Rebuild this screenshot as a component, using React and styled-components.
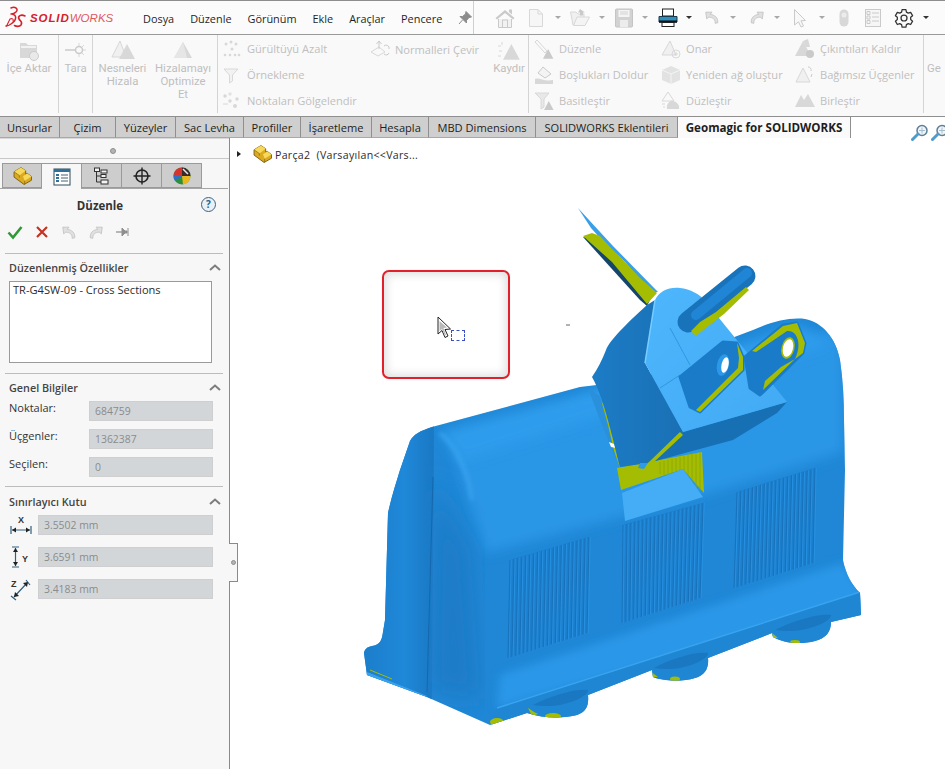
import React from "react"
import styled, { createGlobalStyle } from "styled-components"

const Global = createGlobalStyle`
  html, body { margin: 0; padding: 0; background: #fff; }
  body { font-family: "Open Sans", "Noto Sans", sans-serif; font-size: 11px; color: #2b2b2b; }
  * { box-sizing: border-box; }
`

const Page = styled.div`
  width: 945px;
  height: 769px;
  overflow: hidden;
  display: flex;
  flex-direction: column;
`

/* ---- title bar ---- */
const TitleBar = styled.div`
  height: 35px;
  flex: none;
  display: flex;
  align-items: center;
  background: #fbfbfb;
  border-top: 1px solid #8d8d8d;
  border-bottom: 1px solid #9a9a9a;
`
const Logo = styled.div`
  width: 143px;
  flex: none;
  display: flex;
  align-items: center;
  padding-left: 5px;
`
const LogoBold = styled.span`
  font-family: "Liberation Sans", sans-serif;
  font-weight: 700;
  font-style: italic;
  font-size: 11.5px;
  letter-spacing: 0.9px;
  color: #d6202a;
  margin-left: 3px;
`
const LogoLight = styled.span`
  font-family: "Liberation Sans", sans-serif;
  font-style: italic;
  font-size: 11.5px;
  letter-spacing: 0.05px;
  color: #e0585e;
`
const Menu = styled.div`
  display: flex;
  gap: 16px;
  width: 331px;
  height: 100%;
  align-items: center;
  border-right: 1px solid #cfcfcf;
`
const MenuItem = styled.span`
  font-size: 10.9px;
  color: #1f1f1f;
  padding-top: 1px;
`
const Tools = styled.div`
  display: flex;
  align-items: center;
  padding-left: 20px;
`
const ToolSlot = styled.div`
  display: flex;
  align-items: center;
  justify-content: center;
  width: ${(p) => p.$w || 22}px;
  margin-right: ${(p) => p.$gap || 0}px;
`
const Caret = styled.span`
  width: 0;
  height: 0;
  margin-left: ${(p) => p.$left}px;
  margin-right: ${(p) => p.$right}px;
  border-left: 3px solid transparent;
  border-right: 3px solid transparent;
  border-top: 3px solid ${(p) => (p.$dark ? "#333" : "#a8a8a8")};
`

/* ---- ribbon ---- */
const Ribbon = styled.div`
  height: 81px;
  flex: none;
  display: flex;
  background: #f9f9f9;
  padding-bottom: 3px;
`
const Group = styled.div`
  width: ${(p) => p.$w}px;
  flex: none;
  display: flex;
  padding-left: ${(p) => p.$pad || 0}px;
  border-right: 1px solid #d4d4d4;
`
const LargeButton = styled.div`
  width: ${(p) => p.$w}px;
  flex: none;
  display: flex;
  flex-direction: column;
  align-items: center;
  padding-top: 3px;
  color: #bfbfbf;
  font-family: Roboto, "Open Sans", sans-serif;
  font-size: 11.4px;
  line-height: 13px;
  text-align: center;
  white-space: nowrap;
`
const IconBox = styled.div`
  height: 24px;
  display: flex;
  align-items: center;
  justify-content: center;
`
const SmallColumn = styled.div`
  width: ${(p) => p.$w}px;
  flex: none;
  display: flex;
  flex-direction: column;
  padding-top: 1px;
`
const SmallButton = styled.div`
  height: 26px;
  display: flex;
  align-items: center;
  color: #bfbfbf;
  font-size: 11.1px;
  white-space: nowrap;
`
const SmallIcon = styled.div`
  width: 20px;
  flex: none;
  margin-right: 5px;
  display: flex;
  justify-content: center;
`

/* ---- command tabs ---- */
const TabStrip = styled.div`
  height: 22px;
  flex: none;
  display: flex;
  position: relative;
  z-index: 2;
`
const CommandTab = styled.div`
  width: ${(p) => p.$w}px;
  flex: none;
  display: flex;
  align-items: center;
  justify-content: center;
  white-space: nowrap;
  font-size: ${(p) => (p.$active ? 11.6 : 11.1)}px;
  color: #1e1e1e;
  font-weight: ${(p) => (p.$active ? 700 : 400)};
  background: ${(p) => (p.$active ? "#fafafa" : "#cfcfcf")};
  border-top: 1px solid #8f8f8f;
  border-right: 1px solid #8f8f8f;
  border-bottom: ${(p) => (p.$active ? "0" : "1px solid #a8a8a8")};
`
const ViewTools = styled.div`
  flex: 1;
  display: flex;
  align-items: flex-start;
  padding: 7px 0 0 60px;
  gap: 2px;
  border-top: 1px solid #8f8f8f;
`

/* ---- workspace ---- */
const Workspace = styled.div`
  flex: 1;
  min-height: 0;
  display: flex;
  position: relative;
`
const Panel = styled.aside`
  width: 230px;
  flex: none;
  background: #f7f7f7;
  border-right: 1px solid #8a8a8a;
  display: flex;
  flex-direction: column;
`
const Handle = styled.div`
  height: 21px;
  flex: none;
  display: flex;
  align-items: center;
  justify-content: center;
  padding: 5px 3px 0 0;
  border-bottom: 1px solid #c8c8c8;
  box-shadow: inset 0 4px 0 -3px #d8d8d8;
`
const Dot = styled.span`
  width: 6px;
  height: 6px;
  border-radius: 50%;
  background: #b4b4b4;
  border: 1px solid #8f8f8f;
`
const PanelTabs = styled.div`
  display: flex;
  padding: 4px 0 0 2px;
  height: 30px;
  flex: none;
  border-bottom: 1px solid #a5a5a5;
  margin-right: 1px;
`
const PanelTab = styled.div`
  width: 40px;
  height: ${(p) => (p.$active ? 26 : 25)}px;
  display: flex;
  align-items: center;
  justify-content: center;
  background: ${(p) => (p.$active ? "#f7f7f7" : "#cdcdcd")};
  border: 1px solid #9a9a9a;
  border-left-width: ${(p) => (p.$first ? 1 : 0)}px;
  border-bottom: ${(p) => (p.$active ? "0" : "1px solid #9a9a9a")};
  position: relative;
  z-index: ${(p) => (p.$active ? 1 : 0)};
`
const PanelHead = styled.div`
  height: 33px;
  flex: none;
  display: flex;
  align-items: center;
  justify-content: center;
  position: relative;
  padding: 0 29px 0 0;
  font-weight: 700;
  font-size: 11.5px;
  color: #333;
`
const HelpBadge = styled.span`
  position: absolute;
  right: 13px;
  top: 8px;
  width: 15px;
  height: 15px;
  border-radius: 50%;
  border: 1.5px solid #41627e;
  background: #e8f1f7;
  color: #2d5f86;
  font-size: 10px;
  line-height: 12px;
  text-align: center;
  font-weight: 700;
`
const Actions = styled.div`
  height: 32px;
  flex: none;
  display: flex;
  align-items: center;
  gap: 11px;
  margin: 0 6px 0 5px;
  padding: 0 0 11px 2px;
  border-bottom: 1px solid #bcbcbc;
`
const Section = styled.section`
  display: flex;
  flex-direction: column;
  margin: 0 6px 0 5px;
  height: ${(p) => p.$h}px;
  flex: none;
  border-bottom: ${(p) => (p.$last ? "0" : "1px solid #bcbcbc")};
`
const SectionTitle = styled.div`
  height: ${(p) => p.$h}px;
  flex: none;
  display: flex;
  align-items: center;
  justify-content: space-between;
  padding: 0 2px 0 4px;
  font-size: 10.8px;
  font-weight: 600;
  color: #444;
`
const Notes = styled.div`
  margin-left: 4px;
  width: 203px;
  height: 82px;
  flex: none;
  background: #fff;
  border: 1px solid #9a9a9a;
  padding: 0 3px;
  font-size: 11.1px;
  color: #2b2b2b;
`
const Fields = styled.div`
  display: flex;
  flex-direction: column;
  gap: ${(p) => p.$gap}px;
  padding-left: 4px;
`
const FieldRow = styled.div`
  display: flex;
  align-items: center;
  height: 20px;
  font-size: 11px;
  color: #333;
`
const FieldLabel = styled.span`
  width: ${(p) => p.$w}px;
  flex: none;
  padding-bottom: 8px;
`
const FieldIcon = styled.span`
  width: 29px;
  flex: none;
  display: flex;
  justify-content: flex-start;
`
const ReadOnly = styled.div`
  width: ${(p) => p.$w}px;
  height: 20px;
  flex: none;
  padding-left: 5px;
  line-height: 18px;
  font-size: 10.4px;
  color: #8b8b8b;
  background: #d3d6d9;
  border: 1px solid #e9e9e9;
  outline: 1px solid #cfcfcf;
  outline-offset: -1px;
`
const Grip = styled.div`
  position: absolute;
  left: 229px;
  top: 405px;
  z-index: 1;
  width: 9px;
  height: 39px;
  background: #f7f7f7;
  border: 1px solid #8a8a8a;
  border-left: 0;
  display: flex;
  align-items: center;
  justify-content: center;
`
const SmallDot = styled(Dot)`
  width: 5px;
  height: 5px;
`

/* ---- graphics area ---- */
const Viewport = styled.main`
  flex: 1;
  position: relative;
  background: #fff;
`
const ModelSvg = styled.svg`
  display: block;
`
const TreeRow = styled.div`
  position: absolute;
  left: 7px;
  top: 6px;
  display: flex;
  align-items: center;
  font-size: 10.6px;
  letter-spacing: 0.3px;
  color: #2b2b2b;
  white-space: pre;
`
const TreeLabel = styled.span`
  padding-top: 3px;
  margin-left: 3px;
`
const TreeArrow = styled.span`
  width: 0;
  height: 0;
  border-top: 3.5px solid transparent;
  border-bottom: 3.5px solid transparent;
  border-left: 4px solid #222;
  margin-right: 12px;
`
const Callout = styled.div`
  position: absolute;
  left: 152px;
  top: 132px;
  width: 128px;
  height: 109px;
  border: 2px solid #e2202a;
  border-radius: 7px;
  box-shadow: inset 0 0 9px 3px rgba(0, 0, 0, 0.12), 0 0 1px rgba(0, 0, 0, 0.2);
`
const Marquee = styled.div`
  position: absolute;
  left: 67px;
  top: 58px;
  width: 14px;
  height: 11px;
  border: 1px dashed #3a4fc0;
`
const Pointer = styled.svg`
  position: absolute;
  left: 53px;
  top: 44px;
`

/* ---- icons ---- */
const G = "#d8d8d8"
const GD = "#cacaca"

const Svg = ({ w = 20, h = 20, children }) => (
  <svg width={w} height={h} viewBox={`0 0 ${w} ${h}`} style={{ display: "block" }}>
    {children}
  </svg>
)

const DsMark = () => (
  <svg width="22" height="24" viewBox="0 0 22 24" fill="none" stroke="#d6202a" strokeLinecap="round" strokeLinejoin="round">
    <path d="M6 2 C10 0 14 3 11 6 C9 8 7 8 6 8 M7 8 C12 9 12 14 6 18 C4 19.5 2 20 1 20" strokeWidth="1.5" />
    <path d="M5 13 L1.6 20 M5 13 C7 12 9 13 8 15" strokeWidth="1.1" />
    <path d="M20 10 C16 8 12.5 10 14 13 C15.5 15.5 18 16 16 19 C14.5 21 11 20.5 9.5 19.5" strokeWidth="1.6" />
  </svg>
)

const Home = () => (
  <Svg w={22} h={22}>
    <path d="M1.5 11 L11 3 L20.5 11 L19 12.5 L11 6 L3 12.5 Z" fill={GD} />
    <path d="M15 2.5 h3 v5 l-3 -2.5 Z" fill={GD} />
    <path d="M4.5 12 V20.5 H17.5 V12" fill="#f2f2f2" stroke={GD} />
    <rect x="8.5" y="13" width="5" height="7.5" fill="none" stroke={GD} />
  </Svg>
)
const Doc = () => (
  <Svg w={16} h={20}>
    <path d="M1.5 1.5 H10 L14.5 6 V18.5 H1.5 Z" fill="#f6f6f6" stroke={G} />
    <path d="M10 1.5 V6 H14.5" fill="none" stroke={G} />
  </Svg>
)
const Folder = () => (
  <Svg w={22} h={20}>
    <path d="M1.5 4 H7 L9 6 H15 V17 H4 Z" fill="#f0f0f0" stroke={G} />
    <path d="M4.5 17.5 L8 9 H20.5 L16 17.5 Z" fill="#f4f4f4" stroke={G} />
    <path d="M11 1 l5 3.5 -2 0 0 3 -3 0 0 -3 -2 0 Z" fill={GD} />
  </Svg>
)
const Save = () => (
  <Svg w={18} h={20}>
    <rect x="0.5" y="1" width="17" height="18" rx="1" fill="#d2d2d2" stroke="#c4c4c4" />
    <rect x="3.5" y="2" width="11" height="7" fill="#f4f4f4" />
    <path d="M5 4 h8 M5 6 h8" stroke="#d2d2d2" />
    <rect x="5" y="12" width="8" height="7" fill="#ececec" />
  </Svg>
)
const Printer = () => (
  <Svg w={20} h={20}>
    <rect x="4.5" y="1" width="11" height="7" fill="#fff" stroke="#222" />
    <path d="M1 8.5 H19 V14 H1 Z" fill="#2f8fbe" stroke="#1a3a4c" />
    <rect x="1" y="12.5" width="18" height="2.2" fill="#111" />
    <rect x="4" y="14.5" width="12" height="4" fill="#fff" stroke="#222" />
  </Svg>
)
const UndoIcon = ({ flip }) => (
  <svg width="16" height="17" viewBox="0 0 18 18" style={{ display: "block" }}>
    <g transform={flip ? "translate(18 0) scale(-1 1)" : undefined}>
      <path d="M2 3 L9 3 L7 5.5 C12 6 16 9 15.5 15 L12.5 15.5 C13 11 10 9 5.5 8.5 L3 10.5 Z" fill="#e0e0e0" stroke="#bfbfbf" strokeWidth="0.9" />
    </g>
  </svg>
)
const Arrow = () => (
  <Svg w={14} h={20}>
    <path d="M1.5 1.5 L12.5 12.5 L8 12.8 L10.5 18 L8 19 L5.5 13.8 L1.5 17 Z" fill="#f8f8f8" stroke={GD} />
  </Svg>
)
const Light = () => (
  <Svg w={10} h={20}>
    <rect x="0.5" y="1.5" width="9" height="17" rx="4.5" fill={G} />
    <circle cx="5" cy="7" r="2.5" fill="#ececec" />
  </Svg>
)
const ListDoc = () => (
  <Svg w={16} h={20}>
    <rect x="0.5" y="1.5" width="15" height="17" fill="#f6f6f6" stroke={GD} />
    <path d="M7 5 h7 M7 9 h7 M7 13 h7" stroke={GD} />
    <path d="M2 3.5 h3 v3 h-3 Z M2 8 h3 v3 h-3 Z M2 12.5 h3 v3 h-3 Z" fill="none" stroke={GD} />
  </Svg>
)
const Gear = () => (
  <svg width="20" height="20" viewBox="0 0 24 24" fill="none" stroke="#333" strokeWidth="1.5" style={{ display: "block" }}>
    <path d="M9.7 2h4.6l.6 3 2.2 1.2 2.9-1 2.3 4-2.3 2v2.6l2.3 2-2.3 4-2.9-1-2.2 1.2-.6 3H9.7l-.6-3-2.2-1.2-2.9 1-2.3-4 2.3-2v-2.6l-2.3-2 2.3-4 2.9 1L9.1 5z" strokeLinejoin="round" />
    <circle cx="12" cy="12" r="3.6" />
  </svg>
)
const Zoomer = () => (
  <Svg w={18} h={18}>
    <circle cx="11" cy="6.5" r="5" fill="#eef5fa" stroke="#5d7f98" strokeWidth="1.5" />
    <path d="M11 3.5 v6 M8 6.5 h6" stroke="#a8bccb" />
    <path d="M7 10 L1.5 15.5" stroke="#4f9ccb" strokeWidth="3" strokeLinecap="round" />
  </Svg>
)

const ImportIcon = () => (
  <Svg w={24} h={24}>
    <path d="M3 5 h6 l2 2 h9 v13 H3 Z" fill={G} />
    <rect x="4" y="8" width="15" height="2" fill="#f2f2f2" />
    <circle cx="17" cy="18" r="4.5" fill="#e9e9e9" stroke="#cccccc" />
  </Svg>
)
const ScanIcon = () => (
  <Svg w={24} h={24}>
    <path d="M1 12 H12" stroke={GD} strokeWidth="1.5" />
    <circle cx="15" cy="12" r="3.5" fill="none" stroke={GD} strokeWidth="1.5" />
    <path d="M15 5 v3 M15 16 v3 M20 7 l-2 2 M20 17 l-2 -2 M22 12 h-3" stroke={G} />
  </Svg>
)
const Peak = ({ x = 0, y = 0, s = 1, fill = G }) => (
  <path transform={`translate(${x} ${y}) scale(${s})`} d="M8 0 L16 15 H0 Z" fill={fill} />
)
const AlignIcon = () => (
  <Svg w={24} h={24}>
    <path d="M9 3 L1 19 H15 Z" fill="#f0f0f0" stroke={G} />
    <Peak x={8} y={6} s={1} fill={G} />
  </Svg>
)
const OptimizeIcon = () => (
  <Svg w={24} h={24}>
    <path d="M12 4 L21 20 H3 Z" fill={G} />
    <path d="M12 4 L16 20 H3 Z" fill="#e6e6e6" />
  </Svg>
)
const DotsIcon = ({ funnel }) => (
  <Svg w={20} h={18}>
    {funnel ? (
      <path d="M2 3 H16 L10.5 9 V15 L7.5 17 V9 Z" fill="#f2f2f2" stroke={G} />
    ) : (
      <>
        <circle cx="4" cy="4" r="1.5" fill={G} />
        <circle cx="9" cy="2" r="1.5" fill={G} />
        <circle cx="14" cy="4" r="1.5" fill={G} />
        <circle cx="10" cy="9" r="1.5" fill={G} />
        <circle cx="3" cy="15" r="1.3" fill={G} />
        <circle cx="8" cy="15" r="1.3" fill={G} />
        <circle cx="13" cy="15" r="1.3" fill={G} />
        <circle cx="17" cy="15" r="1.3" fill={G} />
      </>
    )}
  </Svg>
)
const ShadeIcon = () => (
  <Svg w={20} h={18}>
    <circle cx="3" cy="5" r="1.7" fill={G} />
    <circle cx="8" cy="3" r="1.7" fill="#e2e2e2" />
    <circle cx="8" cy="10" r="1.7" fill={G} />
    <circle cx="15" cy="8" r="1.7" fill={G} />
    <circle cx="13" cy="15" r="2" fill={G} />
    <path d="M1 13 h5" stroke={G} />
  </Svg>
)
const FlipIcon = () => (
  <Svg w={20} h={18}>
    <path d="M1 12 L9 7 L15 12 L8 16 Z" fill="none" stroke={G} />
    <path d="M9 9 V1 M6.5 4 L9 1 L11.5 4" fill="none" stroke={GD} />
    <path d="M14 6 a3 3 0 0 1 5 3 M19 13 a3 3 0 0 1 -5 1" fill="none" stroke={GD} />
  </Svg>
)
const ShiftIcon = () => (
  <Svg w={24} h={24}>
    <Peak x={6} y={6} s={1.05} />
    <path d="M1 8 h3 M2 13 h3 M1 18 h3 M5 4 v3" stroke={G} />
  </Svg>
)
const BrushIcon = () => (
  <Svg w={20} h={20}>
    <path d="M3 1 L13 12 L11 14 L1 3 Z" fill="none" stroke={G} />
    <Peak x={9} y={10} s={0.65} fill={GD} />
  </Svg>
)
const FillIcon = () => (
  <Svg w={20} h={20}>
    <path d="M9 2 L17 9 L11 13 L4 8 Z" fill="#f4f4f4" stroke={GD} />
    <path d="M1 19 V14 C5 12 10 17 19 15 V19 Z" fill={G} />
  </Svg>
)
const SimplifyIcon = () => (
  <Svg w={20} h={20}>
    <path d="M1 3 H15 L10 9 V17 L7 19 V9 Z" fill="#e8e8e8" stroke={G} />
    <Peak x={10} y={11} s={0.6} fill={GD} />
  </Svg>
)
const RepairIcon = () => (
  <Svg w={20} h={20}>
    <path d="M9 2 L1 16 H15 Z" fill="#f0f0f0" stroke={G} />
    <circle cx="15" cy="15" r="4" fill="none" stroke={G} />
    <path d="M13 15 h4 M15 13 v4" stroke={G} />
  </Svg>
)
const CubeIcon = () => (
  <Svg w={20} h={20}>
    <path d="M10 1 L19 5 V15 L10 19 L1 15 V5 Z" fill="#e2e2e2" />
    <path d="M1 5 L10 9 L19 5 M10 9 V19" fill="none" stroke="#f4f4f4" />
  </Svg>
)
const FlattenIcon = () => (
  <Svg w={20} h={20}>
    <path d="M7 2 L1 11 H13 Z" fill="none" stroke={G} />
    <path d="M6 19 C5 14 9 10 12 11 C16 12 19 15 18 19 Z" fill={G} />
    <path d="M1 14 h3 M2 17 h2" stroke={G} />
  </Svg>
)
const ProtrudeIcon = () => (
  <Svg w={20} h={20}>
    <Peak x={0} y={2} s={1} fill={G} />
    <path d="M8 2 L13 0 L15 8 L11 8 Z" fill={G} />
    <circle cx="15" cy="15" r="4" fill={GD} />
  </Svg>
)
const LooseIcon = () => (
  <Svg w={20} h={20}>
    <path d="M8 3 L1 17 H15 Z" fill="#f0f0f0" stroke={G} />
    <path d="M13 2 a3 3 0 0 1 3 4 M17 9 l-1 3" fill="none" stroke={GD} />
  </Svg>
)
const MergeIcon = () => (
  <Svg w={20} h={20}>
    <path d="M0 17 L6 5 L9 10 L13 4 L20 17 Z" fill={G} />
  </Svg>
)

const PartIcon = ({ s = 19 }) => (
  <svg width={s} height={s} viewBox="0 0 18 18" style={{ display: "block" }}>
    <path d="M1 5.5 L7.5 1.5 L12 4.5 V7.7 L13.5 7 L17.5 10 V13.5 L10.5 17.5 L1 10.5 Z" fill="#dca91f" stroke="#7d6114" strokeWidth="0.9" strokeLinejoin="round" />
    <path d="M1 5.5 L7.5 1.5 L12 4.5 L6 9 Z" fill="#f6d95a" />
    <path d="M9.5 9.8 L13.5 7 L17.5 10 L11 14 Z" fill="#f6d95a" />
    <path d="M6 9 V11 M6 9 L1 5.5 M11 14 V17.5" stroke="#7d6114" strokeWidth="0.6" fill="none" />
  </svg>
)
const PropsIcon = () => (
  <Svg w={18} h={18}>
    <rect x="1" y="1" width="16" height="16" fill="#fff" stroke="#2f4a5e" />
    <rect x="1" y="1" width="16" height="3" fill="#2f6f98" />
    <path d="M3 7 h3 M3 10 h3 M3 13 h3" stroke="#2f6f98" strokeWidth="2" />
    <path d="M8 7 h7 M8 10 h7 M8 13 h7" stroke="#44606f" />
  </Svg>
)
const ConfigIcon = () => (
  <Svg w={18} h={18}>
    <path d="M3.5 2 V15 H8 M3.5 9 H8" fill="none" stroke="#333" />
    <rect x="1.5" y="1" width="5" height="3.5" fill="#f2f2f2" stroke="#333" />
    <rect x="8" y="3" width="6" height="3" fill="#f2f2f2" stroke="#333" />
    <rect x="8" y="7.5" width="5" height="3" fill="#f2f2f2" stroke="#333" />
    <rect x="8" y="13" width="7" height="4" fill="#f2f2f2" stroke="#333" />
  </Svg>
)
const TargetIcon = () => (
  <Svg w={18} h={18}>
    <circle cx="9" cy="9" r="6" fill="none" stroke="#222" strokeWidth="1.6" />
    <path d="M9 0.5 V17.5 M0.5 9 H17.5" stroke="#222" strokeWidth="1.4" />
  </Svg>
)
const BallIcon = () => (
  <Svg w={18} h={18}>
    <circle cx="9" cy="9" r="8.5" fill="#2c8f3a" />
    <path d="M9 9 L9 .5 A8.5 8.5 0 0 0 .6 7.7 Z" fill="#d8322c" />
    <path d="M9 9 L.6 7.7 A8.5 8.5 0 0 0 2 14 Z" fill="#2f6fc8" />
    <path d="M9 9 L17.5 9 A8.5 8.5 0 0 1 10 17.5 Z" fill="#e8b820" />
    <path d="M9 .5 A8.5 8.5 0 0 1 17.5 9 L9 9 Z" fill="#3a2a2a" />
    <path d="M10 2 L15 7" stroke="#e8e8e8" strokeWidth="1.5" />
  </Svg>
)
const Check = () => (
  <Svg w={16} h={16}>
    <path d="M1.5 8.5 L6 13.5 L14.5 3" fill="none" stroke="#2f9a35" strokeWidth="2.6" />
  </Svg>
)
const Cross = () => (
  <Svg w={16} h={16}>
    <path d="M3 3 L13 13 M13 3 L3 13" stroke="#c8301f" strokeWidth="2.2" />
  </Svg>
)
const PinFlat = () => (
  <Svg w={16} h={16}>
    <path d="M1 8 H7" stroke="#9a9a9a" strokeWidth="1.4" />
    <path d="M7 4 L10 7 H12 V9 H10 L7 12 Z M13 4 V12" fill="#8f8f8f" stroke="#8f8f8f" />
  </Svg>
)
const PinIcon = () => (
  <Svg w={14} h={14}>
    <path d="M8 0.5 L13.5 6 L11 6.5 L8.5 9.5 L8.5 12 L2 5.5 L4.5 5.5 L7.5 3 Z M4.5 9 L1 13" fill="#8c8c8c" stroke="#8c8c8c" />
  </Svg>
)
const Chevron = () => (
  <svg width="12" height="7" viewBox="0 0 12 7" style={{ display: "block" }}>
    <path d="M1 6 L6 1.5 L11 6" fill="none" stroke="#7d7d7d" strokeWidth="2" />
  </svg>
)
const DimX = () => (
  <Svg w={24} h={20}>
    <text x="9" y="8" fontSize="9" fontWeight="700" fontFamily="Liberation Sans" fill="#333">X</text>
    <path d="M2 11 V19 M22 11 V19 M3 15 H21" stroke="#2e5f7d" strokeWidth="1.2" />
    <path d="M3 15 l4 -2.5 v5 Z M21 15 l-4 -2.5 v5 Z" fill="#222" />
  </Svg>
)
const DimY = () => (
  <Svg w={24} h={24}>
    <path d="M3 2 H10 M3 22 H10 M6.5 3 V21" stroke="#2e5f7d" strokeWidth="1.2" />
    <path d="M6.5 3 l-2.5 4 h5 Z M6.5 21 l-2.5 -4 h5 Z" fill="#222" />
    <text x="13" y="17" fontSize="9" fontWeight="700" fontFamily="Liberation Sans" fill="#333">Y</text>
  </Svg>
)
const DimZ = () => (
  <Svg w={24} h={24}>
    <text x="2" y="10" fontSize="9" fontWeight="700" fontFamily="Liberation Sans" fill="#333">Z</text>
    <path d="M2 19 L7 23 M17 3 L21 8 M5 20 L18 6" stroke="#2e5f7d" strokeWidth="1.2" fill="none" />
    <path d="M5 20 l1 -5 4 4 Z M19 5 l-1 5 -4 -4 Z" fill="#222" />
  </Svg>
)

/* ---- model drawing, coordinates are page pixels ---- */
const BODY =
  "M410 441 C414 434 420 431 432 427 L580 387 L640 380 L700 350 L753 330 C770 322 790 317 805 319 C822 322 836 338 840 360 C843 380 844 400 844 420 L845 470 L843 560 C846 575 852 585 860 593 L861 615 L831 622 C831 632 826 638 815 641 C800 645 783 643 773 637 L772 633 L708 658 C709 668 705 675 695 678 C682 682 662 681 653 677 L652 670 L588 695 C589 706 586 712 577 715 C565 718 545 719 527 713 L490 725 L427 697 L367 675 L364 653 C365 649 367 647 372 646 C380 645 382 640 383 632 L385 620 L388 513 C392 495 397 480 400 470 Z"
const FOOT_TOPS = [
  "M533 705 C548 697 575 688 588 690 C589 697 560 710 533 705 Z",
  "M654 668 C668 660 695 651 708 653 C709 660 680 673 654 668 Z",
  "M775 630 C790 622 818 613 831 615 C832 622 802 635 775 630 Z",
]
const VENTS = [
  [[510, 560], [589, 537], [587, 633], [508, 658]],
  [[623, 525], [703, 503], [700, 598], [622, 623]],
  [[737, 492], [815, 468], [813, 563], [734, 588]],
]
const lerp = (a, b, t) => a + (b - a) * t

const Vent = ({ pts }) => {
  const [a, b, c, d] = pts
  const lines = Array.from({ length: 21 }, (_, i) => {
    const t = i / 20
    return [lerp(a[0], b[0], t), lerp(a[1], b[1], t), lerp(d[0], c[0], t), lerp(d[1], c[1], t)]
  })
  return (
    <g>
      <polygon points={pts.map((p) => p.join(",")).join(" ")} fill="#1c7fcd" />
      {lines.map(([x1, y1, x2, y2], i) => (
        <g key={i}>
          <line x1={x1} y1={y1} x2={x2} y2={y2} stroke="#1871b8" strokeWidth="0.9" />
          <line x1={x1 + 1.2} y1={y1} x2={x2 + 1.2} y2={y2} stroke="#2a94e4" strokeWidth="0.8" />
        </g>
      ))}
    </g>
  )
}

const Model = () => (
  <ModelSvg width="715" height="631" viewBox="230 138 715 631">
    <defs>
      <filter id="b2"><feGaussianBlur stdDeviation="2" /></filter>
      <filter id="b4"><feGaussianBlur stdDeviation="4" /></filter>
      <filter id="b6"><feGaussianBlur stdDeviation="6" /></filter>
      <filter id="b12"><feGaussianBlur stdDeviation="12" /></filter>
      <clipPath id="bodyClip"><path d={BODY} /></clipPath>
      <linearGradient id="capShade" x1="0" y1="0" x2="1" y2="0">
        <stop offset="0" stopColor="#1b7dca" />
        <stop offset="0.6" stopColor="#1f88d8" />
        <stop offset="1" stopColor="#1a78c4" />
      </linearGradient>
      <linearGradient id="plugFace" x1="0" y1="0" x2="1" y2="1">
        <stop offset="0" stopColor="#4db6fc" />
        <stop offset="1" stopColor="#41aaf4" />
      </linearGradient>
      <linearGradient id="plugSide" x1="0" y1="0" x2="1" y2="0">
        <stop offset="0" stopColor="#1c7cc6" />
        <stop offset="1" stopColor="#1a70b4" />
      </linearGradient>
    </defs>

    {/* fin behind the plug */}
    <polygon points="583,237 640,300 647,306 652,296 600,240" fill="#16456b" />
    <polygon points="578,208 612,245 658,292 650,292 625,262 610,248 600,238 591,228" fill="#3b9fe8" />
    <polygon points="583,236 592,233 600,236 610,247 625,262 640,278 657,293 647,304 612,262" fill="#a4bd02" />

    {/* body */}
    <path d={BODY} fill="#1f87d6" />
    <g clipPath="url(#bodyClip)">
      <polygon points="380,430 434,425 432,700 360,680" fill="url(#capShade)" />
      <polygon points="452,450 600,395 830,330 843,340 843,452 703,495 620,517 486,553" fill="#2a96e6" filter="url(#b6)" />
      <polygon points="440,432 590,392 800,325 830,345 700,385 590,420 462,460" fill="#2f9cec" filter="url(#b6)" />
      <polygon points="432,480 470,550 480,700 430,690" fill="#1a7cc8" filter="url(#b12)" />
      <polygon points="500,675 843,563 862,592 862,605 497,708" fill="#2a97e8" filter="url(#b4)" />
      <polygon points="497,708 860,592 870,620 835,650 700,690 560,730 490,730" fill="#1f86d4" />
      <line x1="497" y1="708" x2="860" y2="592" stroke="#38a4f0" strokeWidth="1.5" />
      {FOOT_TOPS.map((d) => (
        <path key={d} d={d} fill="#1a78c2" />
      ))}
      <path d="M433 477 L427 692" stroke="#1568ad" strokeWidth="1" />
      <path d="M440 433 C455 445 468 470 472 500" stroke="#3aa6f2" strokeWidth="3" fill="none" filter="url(#b2)" />
      <polygon points="367,672 427,696 424,698 365,676" fill="#3aa3ee" />
      {VENTS.map((v) => (
        <Vent key={v[0].join()} pts={v} />
      ))}
      {/* yellow scan gaps along the base */}
      <ellipse cx="497" cy="722" rx="7" ry="4" fill="#a4bd02" />
      <ellipse cx="553" cy="716" rx="8" ry="3" fill="#a4bd02" />
      <path d="M528 708 L534 712 L538 714 L532 716 Z" fill="#a4bd02" />
      <ellipse cx="675" cy="679" rx="5" ry="2.5" fill="#a4bd02" />
      <path d="M650 671 L658 677 L652 677 Z" fill="#a4bd02" />
      <ellipse cx="795" cy="642" rx="5" ry="2" fill="#a4bd02" />
      <path d="M772 633 L778 638 L773 638 Z" fill="#a4bd02" />
      <path d="M370 670 L392 679" stroke="#a4bd02" strokeWidth="1" />
    </g>

    {/* recess under the plug */}
    <polygon points="617,468 702,452 704,493 683,469 621,490" fill="#a4bd02" />
    <g stroke="#8da304" strokeWidth="0.8">
      {Array.from({ length: 11 }, (_, i) => (
        <line key={i} x1={660 + i * 4} y1={462 - i} x2={660 + i * 4} y2={474 + i * 1.6} />
      ))}
    </g>
    <polygon points="622,493 683,469 703,497 625,521" fill="#45adf6" />
    <polygon points="596,398 604,404 614,440 620,468 612,445" fill="#a4bd02" />
    <polygon points="588,388 600,396 608,425 616,460 600,420" fill="#2a90dc" />
    <polygon points="609,442 614,444 616,448 611,447" fill="#fff" />

    {/* plug */}
    <path d="M647 305 L655 300 L645 363 L683 432 L648 463 L620 467 C614 445 605 400 592 377 C598 368 602 360 606 350 C610 340 625 325 647 305 Z" fill="url(#plugSide)" />
    <polygon points="683,432 787,402 777,413 733,440 648,463" fill="#1870b4" />
    <path d="M655 300 C660 291 668 287 680 288 C690 289 700 294 706 302 L787 402 L683 432 L645 363 Z" fill="url(#plugFace)" />
    <polyline points="655,300 645,363" stroke="#78ccff" strokeWidth="1.5" fill="none" />
    <path d="M670 328 L690 365 M660 388 L680 375" stroke="#2a8fdc" strokeWidth="0.8" fill="none" />
    <polygon points="648,463 680,432 683,435 653,463" fill="#a4bd02" />
    <polygon points="640,463 648,463 644,469 638,468" fill="#2e9ae8" />

    {/* round prong */}
    <line x1="688" y1="322" x2="745" y2="276" stroke="#1873bb" strokeWidth="21" strokeLinecap="round" />
    <line x1="696" y1="315" x2="747" y2="273" stroke="#1f85d4" strokeWidth="10" strokeLinecap="round" />
    <polygon points="691,331 700,322 716,312 728,302 746,287 749,290 724,314 702,331 696,336" fill="#a4bd02" />

    {/* flat blades */}
    <polygon points="680,377 723,342 737,343 743,357 743,370 700,412 690,407" fill="#1a7cc8" stroke="#1a7cc8" strokeWidth="3" strokeLinejoin="round" />
    <polygon points="737,343 743,357 743,370 700,412 696,410 738,368 739,358" fill="#a4bd02" />
    <ellipse cx="723" cy="365" rx="6" ry="11" transform="rotate(12 723 365)" fill="#2b99e8" />
    <ellipse cx="725" cy="365" rx="3.5" ry="8" transform="rotate(12 725 365)" fill="#fff" />

    <polygon points="745,357 783,325 797,323 805,343 803,353 760,395 750,388" fill="#1a7cc8" stroke="#1a7cc8" strokeWidth="3" strokeLinejoin="round" />
    <path d="M752 351 L783 326 L797 323 L805 343 L803 353 L795 359 C802 345 798 330 787 331 L756 352 Z" fill="#a4bd02" />
    <polygon points="795,359 763,390 765,381 781,367" fill="#a4bd02" />
    <ellipse cx="788" cy="348" rx="6.5" ry="11" transform="rotate(14 788 348)" fill="#a4bd02" />
    <ellipse cx="788" cy="348" rx="5" ry="9" transform="rotate(14 788 348)" fill="#fff" />

    <line x1="566" y1="325" x2="570" y2="325" stroke="#666" strokeWidth="1" />
  </ModelSvg>
)

const TABS = [
  ["Unsurlar", 60],
  ["Çizim", 56],
  ["Yüzeyler", 60],
  ["Sac Levha", 68],
  ["Profiller", 57],
  ["İşaretleme", 71],
  ["Hesapla", 57],
  ["MBD Dimensions", 107],
  ["SOLIDWORKS Eklentileri", 142],
]

const App = () => (
  <Page>
    <Global />
    <TitleBar>
      <Logo>
        <DsMark />
        <LogoBold>SOLID</LogoBold>
        <LogoLight>WORKS</LogoLight>
      </Logo>
      <Menu>
        <MenuItem>Dosya</MenuItem>
        <MenuItem>Düzenle</MenuItem>
        <MenuItem>Görünüm</MenuItem>
        <MenuItem>Ekle</MenuItem>
        <MenuItem>Araçlar</MenuItem>
        <MenuItem>Pencere</MenuItem>
        <ToolSlot $w={14}><PinIcon /></ToolSlot>
      </Menu>
      <Tools>
        <ToolSlot $w={22} $gap={12}><Home /></ToolSlot>
        <ToolSlot $w={16}><Doc /></ToolSlot>
        <Caret $left={11} $right={8} />
        <ToolSlot $w={22}><Folder /></ToolSlot>
        <Caret $left={8} $right={10} />
        <ToolSlot $w={18}><Save /></ToolSlot>
        <Caret $left={9} $right={10} />
        <ToolSlot $w={20}><Printer /></ToolSlot>
        <Caret $dark $left={8} $right={11} />
        <ToolSlot $w={18}><UndoIcon /></ToolSlot>
        <Caret $left={9} $right={12} />
        <ToolSlot $w={18}><UndoIcon flip /></ToolSlot>
        <Caret $left={8} $right={13} />
        <ToolSlot $w={14}><Arrow /></ToolSlot>
        <Caret $left={12} $right={14} />
        <ToolSlot $w={10} $gap={16}><Light /></ToolSlot>
        <ToolSlot $w={16} $gap={13}><ListDoc /></ToolSlot>
        <ToolSlot $w={20}><Gear /></ToolSlot>
        <Caret $dark $left={9} $right={0} />
      </Tools>
    </TitleBar>

    <Ribbon>
      <Group $w={59}>
        <LargeButton $w={58}>
          <IconBox><ImportIcon /></IconBox>
          İçe Aktar
        </LargeButton>
      </Group>
      <Group $w={34}>
        <LargeButton $w={33}>
          <IconBox><ScanIcon /></IconBox>
          Tara
        </LargeButton>
      </Group>
      <Group $w={125}>
        <LargeButton $w={59}>
          <IconBox><AlignIcon /></IconBox>
          <span>Nesneleri<br />Hizala</span>
        </LargeButton>
        <LargeButton $w={62}>
          <IconBox><OptimizeIcon /></IconBox>
          <span>Hizalamayı<br />Optimize<br />Et</span>
        </LargeButton>
      </Group>
      <Group $w={311} $pad={4}>
        <SmallColumn $w={148}>
          <SmallButton><SmallIcon><DotsIcon /></SmallIcon>Gürültüyü Azalt</SmallButton>
          <SmallButton><SmallIcon><DotsIcon funnel /></SmallIcon>Örnekleme</SmallButton>
          <SmallButton><SmallIcon><ShadeIcon /></SmallIcon>Noktaları Gölgelendir</SmallButton>
        </SmallColumn>
        <SmallColumn $w={121}>
          <SmallButton><SmallIcon><FlipIcon /></SmallIcon>Normalleri Çevir</SmallButton>
        </SmallColumn>
        <LargeButton $w={36}>
          <IconBox><ShiftIcon /></IconBox>
          Kaydır
        </LargeButton>
      </Group>
      <Group $w={395} $pad={5}>
        <SmallColumn $w={127}>
          <SmallButton><SmallIcon><BrushIcon /></SmallIcon>Düzenle</SmallButton>
          <SmallButton><SmallIcon><FillIcon /></SmallIcon>Boşlukları Doldur</SmallButton>
          <SmallButton><SmallIcon><SimplifyIcon /></SmallIcon>Basitleştir</SmallButton>
        </SmallColumn>
        <SmallColumn $w={134}>
          <SmallButton><SmallIcon><RepairIcon /></SmallIcon>Onar</SmallButton>
          <SmallButton><SmallIcon><CubeIcon /></SmallIcon>Yeniden ağ oluştur</SmallButton>
          <SmallButton><SmallIcon><FlattenIcon /></SmallIcon>Düzleştir</SmallButton>
        </SmallColumn>
        <SmallColumn $w={125}>
          <SmallButton><SmallIcon><ProtrudeIcon /></SmallIcon>Çıkıntıları Kaldır</SmallButton>
          <SmallButton><SmallIcon><LooseIcon /></SmallIcon>Bağımsız Üçgenler</SmallButton>
          <SmallButton><SmallIcon><MergeIcon /></SmallIcon>Birleştir</SmallButton>
        </SmallColumn>
      </Group>
      <LargeButton $w={20}>
        <IconBox />
        <span>Ge</span>
      </LargeButton>
    </Ribbon>

    <TabStrip>
      {TABS.map(([label, w]) => (
        <CommandTab key={label} $w={w}>{label}</CommandTab>
      ))}
      <CommandTab $active $w={173}>Geomagic for SOLIDWORKS</CommandTab>
      <ViewTools>
        <Zoomer />
        <Zoomer />
      </ViewTools>
    </TabStrip>

    <Workspace>
      <Panel>
        <Handle><Dot /></Handle>
        <PanelTabs>
          <PanelTab $first><PartIcon /></PanelTab>
          <PanelTab $active><PropsIcon /></PanelTab>
          <PanelTab><ConfigIcon /></PanelTab>
          <PanelTab><TargetIcon /></PanelTab>
          <PanelTab><BallIcon /></PanelTab>
        </PanelTabs>
        <PanelHead>
          Düzenle
          <HelpBadge>?</HelpBadge>
        </PanelHead>
        <Actions>
          <Check />
          <Cross />
          <UndoIcon />
          <UndoIcon flip />
          <PinFlat />
        </Actions>
        <Section $h={120}>
          <SectionTitle $h={27}>Düzenlenmiş Özellikler <Chevron /></SectionTitle>
          <Notes>TR-G4SW-09 - Cross Sections</Notes>
        </Section>
        <Section $h={113}>
          <SectionTitle $h={27}>Genel Bilgiler <Chevron /></SectionTitle>
          <Fields $gap={8}>
            <FieldRow><FieldLabel $w={80}>Noktalar:</FieldLabel><ReadOnly $w={124}>684759</ReadOnly></FieldRow>
            <FieldRow><FieldLabel $w={80}>Üçgenler:</FieldLabel><ReadOnly $w={124}>1362387</ReadOnly></FieldRow>
            <FieldRow><FieldLabel $w={80}>Seçilen:</FieldLabel><ReadOnly $w={124}>0</ReadOnly></FieldRow>
          </Fields>
        </Section>
        <Section $h={130} $last>
          <SectionTitle $h={28}>Sınırlayıcı Kutu <Chevron /></SectionTitle>
          <Fields $gap={12}>
            <FieldRow><FieldIcon><DimX /></FieldIcon><ReadOnly $w={175}>3.5502 mm</ReadOnly></FieldRow>
            <FieldRow><FieldIcon><DimY /></FieldIcon><ReadOnly $w={175}>3.6591 mm</ReadOnly></FieldRow>
            <FieldRow><FieldIcon><DimZ /></FieldIcon><ReadOnly $w={175}>3.4183 mm</ReadOnly></FieldRow>
          </Fields>
        </Section>
      </Panel>
      <Grip><SmallDot /></Grip>
      <Viewport>
        <Model />
        <TreeRow>
          <TreeArrow />
          <PartIcon />
          <TreeLabel>{"Parça2  (Varsayılan<<Vars..."}</TreeLabel>
        </TreeRow>
        <Callout>
          <Pointer width="16" height="24" viewBox="0 0 16 24">
            <path d="M1 1 L1 18 L5 14.5 L8 21.5 L11 20 L8 13.5 L13.5 13 Z" fill="#fff" stroke="#222" strokeWidth="1" />
            <path d="M2.5 5 L2.5 15 L5 13 L8 19.5 L9 19 L6.5 12 L10 11.5 Z" fill="#b9b9b9" />
          </Pointer>
          <Marquee />
        </Callout>
      </Viewport>
    </Workspace>
  </Page>
)

export default App
